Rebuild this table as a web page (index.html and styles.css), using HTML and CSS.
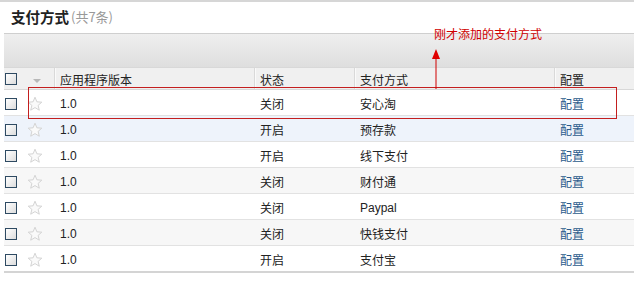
FILE: index.html
```html
<!DOCTYPE html>
<html>
<head>
<meta charset="utf-8">
<link rel="stylesheet" href="styles.css">
</head>
<body>
<div class="page">
  <div class="title"><span class="name">支付方式</span><span class="count">(共7条)</span></div>
  <div class="panel">
    <div class="toolbar"></div>
    <div class="table">
      <div class="row head">
        <div class="cell chk"><span class="box"></span></div>
        <div class="cell sort"><span class="tri"></span></div>
        <div class="cell c3">应用程序版本</div>
        <div class="cell c4">状态</div>
        <div class="cell c5">支付方式</div>
        <div class="cell c6">配置</div>
      </div>
      <div class="row">
        <div class="cell chk"><span class="box"></span></div>
        <div class="cell sort"><svg class="star" width="16" height="16" viewBox="0 0 16 16"><path d="M8 1.2l1.9 4.6 4.9.4-3.7 3.2 1.2 4.8L8 11.6l-4.3 2.6 1.2-4.8L1.2 6.2l4.9-.4z" fill="#fafafa" stroke="#d4d4d4" stroke-width="1"/></svg></div>
        <div class="cell c3 num">1.0</div><div class="cell c4">关闭</div><div class="cell c5">安心淘</div><div class="cell c6"><a class="link">配置</a></div>
      </div>
      <div class="row blue">
        <div class="cell chk"><span class="box"></span></div>
        <div class="cell sort"><svg class="star" width="16" height="16" viewBox="0 0 16 16"><path d="M8 1.2l1.9 4.6 4.9.4-3.7 3.2 1.2 4.8L8 11.6l-4.3 2.6 1.2-4.8L1.2 6.2l4.9-.4z" fill="#fafafa" stroke="#d4d4d4" stroke-width="1"/></svg></div>
        <div class="cell c3 num">1.0</div><div class="cell c4">开启</div><div class="cell c5">预存款</div><div class="cell c6"><a class="link">配置</a></div>
      </div>
      <div class="row">
        <div class="cell chk"><span class="box"></span></div>
        <div class="cell sort"><svg class="star" width="16" height="16" viewBox="0 0 16 16"><path d="M8 1.2l1.9 4.6 4.9.4-3.7 3.2 1.2 4.8L8 11.6l-4.3 2.6 1.2-4.8L1.2 6.2l4.9-.4z" fill="#fafafa" stroke="#d4d4d4" stroke-width="1"/></svg></div>
        <div class="cell c3 num">1.0</div><div class="cell c4">开启</div><div class="cell c5">线下支付</div><div class="cell c6"><a class="link">配置</a></div>
      </div>
      <div class="row alt">
        <div class="cell chk"><span class="box"></span></div>
        <div class="cell sort"><svg class="star" width="16" height="16" viewBox="0 0 16 16"><path d="M8 1.2l1.9 4.6 4.9.4-3.7 3.2 1.2 4.8L8 11.6l-4.3 2.6 1.2-4.8L1.2 6.2l4.9-.4z" fill="#fafafa" stroke="#d4d4d4" stroke-width="1"/></svg></div>
        <div class="cell c3 num">1.0</div><div class="cell c4">关闭</div><div class="cell c5">财付通</div><div class="cell c6"><a class="link">配置</a></div>
      </div>
      <div class="row">
        <div class="cell chk"><span class="box"></span></div>
        <div class="cell sort"><svg class="star" width="16" height="16" viewBox="0 0 16 16"><path d="M8 1.2l1.9 4.6 4.9.4-3.7 3.2 1.2 4.8L8 11.6l-4.3 2.6 1.2-4.8L1.2 6.2l4.9-.4z" fill="#fafafa" stroke="#d4d4d4" stroke-width="1"/></svg></div>
        <div class="cell c3 num">1.0</div><div class="cell c4">关闭</div><div class="cell c5 num">Paypal</div><div class="cell c6"><a class="link">配置</a></div>
      </div>
      <div class="row alt">
        <div class="cell chk"><span class="box"></span></div>
        <div class="cell sort"><svg class="star" width="16" height="16" viewBox="0 0 16 16"><path d="M8 1.2l1.9 4.6 4.9.4-3.7 3.2 1.2 4.8L8 11.6l-4.3 2.6 1.2-4.8L1.2 6.2l4.9-.4z" fill="#fafafa" stroke="#d4d4d4" stroke-width="1"/></svg></div>
        <div class="cell c3 num">1.0</div><div class="cell c4">关闭</div><div class="cell c5">快钱支付</div><div class="cell c6"><a class="link">配置</a></div>
      </div>
      <div class="row last">
        <div class="cell chk"><span class="box"></span></div>
        <div class="cell sort"><svg class="star" width="16" height="16" viewBox="0 0 16 16"><path d="M8 1.2l1.9 4.6 4.9.4-3.7 3.2 1.2 4.8L8 11.6l-4.3 2.6 1.2-4.8L1.2 6.2l4.9-.4z" fill="#fafafa" stroke="#d4d4d4" stroke-width="1"/></svg></div>
        <div class="cell c3 num">1.0</div><div class="cell c4">开启</div><div class="cell c5">支付宝</div><div class="cell c6"><a class="link">配置</a></div>
      </div>
    </div>
  </div>
  <div class="mark-box"></div>
  <svg class="mark-arrow" width="12" height="40" viewBox="0 0 12 40"><path d="M6 0L10 10H2z" fill="#e00000"/><line x1="6" y1="9" x2="6" y2="40" stroke="#d00000" stroke-width="1"/></svg>
  <div class="mark-text">刚才添加的支付方式</div>
</div>
</body>
</html>
```

FILE: styles.css
```css
html, body {
  margin: 0;
  padding: 0;
  background: #fff;
}
body {
  font-family: "Liberation Sans", "Noto Sans CJK SC", sans-serif;
  font-size: 12px;
  color: #222;
}
.page {
  position: relative;
  width: 634px;
  height: 301px;
  border-top: 2px solid #d6d6d6;
  box-sizing: border-box;
  overflow: hidden;
}
.title {
  height: 31px;
  padding-left: 11px;
  padding-bottom: 3px;
  box-sizing: border-box;
  display: flex;
  align-items: center;
  gap: 2px;
}
.title .name {
  font-family: "Noto Sans CJK SC", sans-serif;
  font-weight: bold;
  font-size: 14.5px;
  color: #222;
}
.title .count {
  font-family: "Noto Sans CJK SC", sans-serif;
  font-size: 13px;
  color: #999;
}
.panel {
  margin-left: 4px;
}
.toolbar {
  height: 33px;
  border-top: 1px solid #cfcfcf;
  background: linear-gradient(#efefef, #dedede);
}
.table {
  display: flex;
  flex-direction: column;
}
.row {
  display: grid;
  grid-template-columns: 20px 30px 200px 100px 200px 80px;
  height: 26px;
  padding-top: 2px;
  border-bottom: 1px solid #e2e2e2;
  box-sizing: border-box;
  align-items: center;
  background: #fff;
}
.row.head {
  height: 23px;
  padding-top: 0;
  background: #f0f0f0;
  border-top: 1px solid #d8d8d8;
  border-bottom: 1px solid #d8d8d8;
}
.row.head .cell {
  height: 100%;
  display: flex;
  align-items: center;
  padding-top: 1px;
}
.row.head .c3, .row.head .c4, .row.head .c5, .row.head .c6 {
  border-left: 1px solid #d9d9d9;
  box-shadow: inset 1px 0 #fafafa;
  padding-left: 5px;
}
.row.blue { background: #eef3fb; }
.row.alt { background: #f7f7f7; }
.row.last { border-bottom: 2px solid #d4d4d4; height: 27px; }
.cell {
  font-family: "Noto Sans CJK SC", sans-serif;
  font-size: 12px;
  color: #222;
  white-space: nowrap;
  box-sizing: border-box;
}
.cell.c3, .cell.c4, .cell.c5, .cell.c6 { padding-left: 6px; }
.cell.num { font-family: "Liberation Sans", sans-serif; font-size: 12px; }
.cell.chk { display: flex; align-items: center; padding-left: 1px; }
.cell.sort { display: flex; align-items: center; padding-left: 3px; }
.box {
  width: 10px;
  height: 10px;
  border: 1px solid #2e4a62;
  background: linear-gradient(135deg, #ffffff, #dcdcdc);
}
.tri {
  width: 0;
  height: 0;
  margin-left: 6px;
  margin-top: 3px;
  border-left: 4px solid transparent;
  border-right: 4px solid transparent;
  border-top: 4px solid #b8b8b8;
}
.star { display: block; }
.link {
  color: #2b5b8c;
  text-decoration: none;
}
.mark-box {
  position: absolute;
  left: 28px;
  top: 85px;
  width: 589px;
  height: 32px;
  border: 1px solid #c31f1f;
  box-sizing: border-box;
}
.mark-arrow {
  position: absolute;
  left: 430px;
  top: 47px;
}
.mark-text {
  position: absolute;
  left: 434px;
  top: 23px;
  font-family: "Noto Sans CJK SC", sans-serif;
  font-size: 12px;
  color: #d00000;
}
```
